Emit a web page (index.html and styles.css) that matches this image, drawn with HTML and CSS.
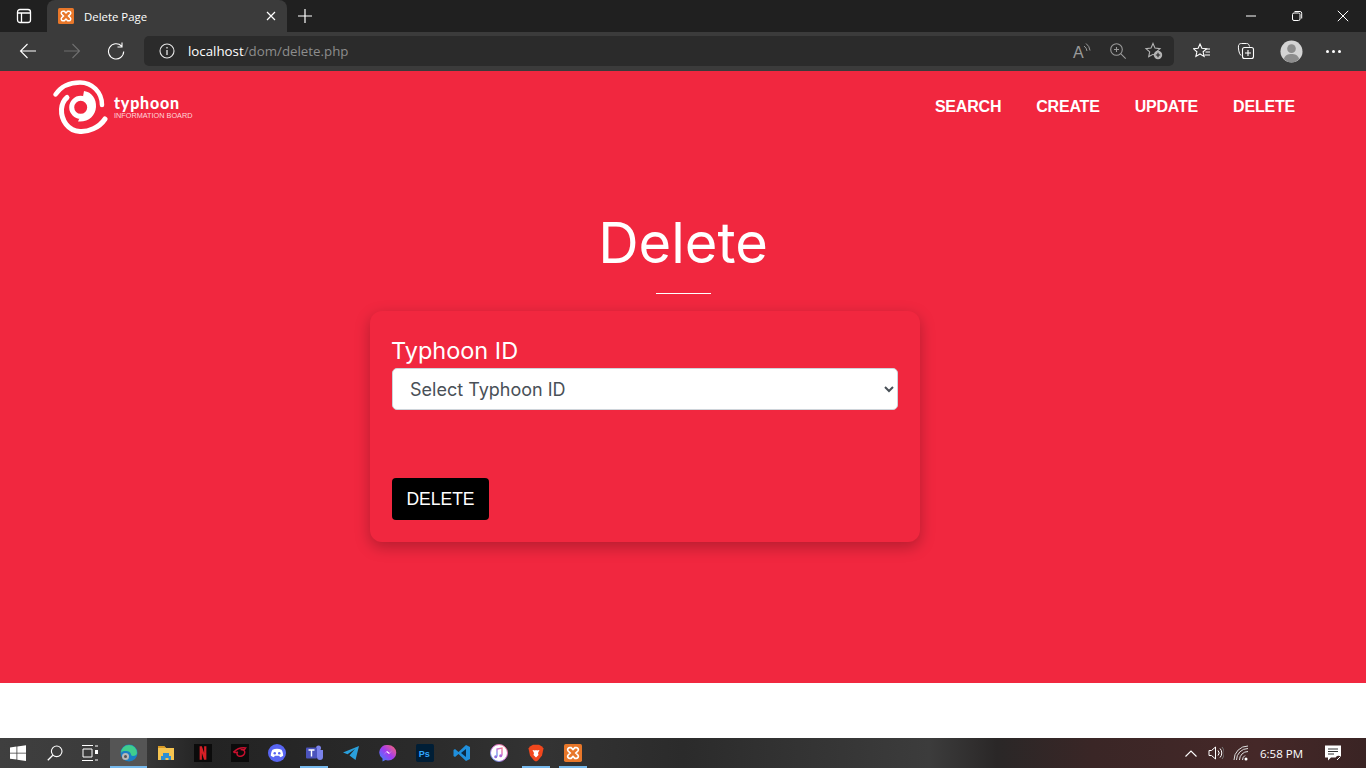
FILE: index.html
```html
<!DOCTYPE html>
<html lang="en">
<head>
<meta charset="utf-8">
<title>Delete Page</title>
<link rel="stylesheet" href="styles.css">
</head>
<body>
<header class="chrome">
  <div class="tabstrip">
    <div class="tabs-btn">
      <svg class="ic16" viewBox="0 0 16 16"><rect x="1.5" y="1.5" width="13" height="13" rx="2.5" fill="none" stroke="#fff" stroke-width="1.3"/><path d="M2 5h12M5.5 5v9" fill="none" stroke="#fff" stroke-width="1.3"/></svg>
    </div>
    <div class="tab">
      <svg class="fav" viewBox="0 0 16 16"><use href="#xampp"/></svg>
      <span class="tab-title">Delete Page</span>
      <svg class="tab-x" viewBox="0 0 10 10"><path d="M1 1l8 8M9 1l-8 8" stroke="#fff" stroke-width="1.2"/></svg>
    </div>
    <svg class="tab-plus" viewBox="0 0 14 14"><path d="M7 0v14M0 7h14" stroke="#fff" stroke-width="1.2"/></svg>
    <div class="winctl">
      <svg class="wc" viewBox="0 0 12 12"><path d="M1 6h10" stroke="#fff" stroke-width="1"/></svg>
      <svg class="wc" viewBox="0 0 12 12"><rect x="1.5" y="3" width="7.5" height="7.5" rx="1.5" fill="none" stroke="#fff"/><path d="M3.5 1.5h5.5a1.7 1.7 0 0 1 1.7 1.7v5.3" fill="none" stroke="#fff"/></svg>
      <svg class="wc" viewBox="0 0 12 12"><path d="M.8.8l10.4 10.4M11.2.8L.8 11.2" stroke="#fff" stroke-width="1"/></svg>
    </div>
  </div>
  <div class="toolbar">
    <div class="navbtns">
      <svg class="tb-ic" viewBox="0 0 18 18"><path d="M17 9H1.5M8.5 2L1.5 9l7 7" fill="none" stroke="#fff" stroke-width="1.1"/></svg>
      <svg class="tb-ic" viewBox="0 0 18 18"><path d="M1 9h15.5M9.5 2l7 7-7 7" fill="none" stroke="#6f6f6f" stroke-width="1.1"/></svg>
      <svg class="tb-ic" viewBox="0 0 18 18"><path d="M14.500 4A7.600 7.600 0 1 0 16.700 9.500M15 .5V5h-4.500" fill="none" stroke="#fff" stroke-width="1.100"/></svg>
    </div>
    <div class="omnibox">
      <svg class="info" viewBox="0 0 16 16"><circle cx="8" cy="8" r="7" fill="none" stroke="#e6e6e6" stroke-width="1.1"/><path d="M8 7v5M8 4v1.500" stroke="#e6e6e6" stroke-width="1.300"/></svg>
      <span class="url"><span class="host">localhost</span>/dom/delete.php</span>
      <div class="omni-right">
        <svg class="om-ic" viewBox="0 0 18 18"><text x="0" y="15.500" class="read-a">A</text><path d="M11 4a7 7 0 0 1 3 5M13 1.500a10 10 0 0 1 4 7" fill="none" stroke="#9a9a9a"/></svg>
        <svg class="om-ic" viewBox="0 0 18 18"><circle cx="7.500" cy="7.500" r="5.800" fill="none" stroke="#9a9a9a" stroke-width="1.100"/><path d="M11.700 11.700l5 5M5 7.500h5M7.500 5v5" stroke="#9a9a9a" stroke-width="1.100"/></svg>
        <svg class="om-ic" viewBox="0 0 18 18"><path d="M8 1.500l2 4.600 5 .5-3.700 3.300 1 4.800L8 12.300l-4.300 2.400 1-4.800L1 6.600l5-.5z" fill="none" stroke="#b5b5b5" stroke-width="1.100"/><circle cx="13" cy="13" r="4.200" fill="#b5b5b5"/><path d="M13 10.800v4.400M10.800 13h4.400" stroke="#222" stroke-width="1.100"/></svg>
      </div>
    </div>
    <div class="tools">
      <svg class="tl-ic" viewBox="0 0 18 18"><path d="M7 2l1.900 4.300 4.600.5-3.400 3 1 4.600L7 12l-4.100 2.400 1-4.600-3.400-3 4.600-.5z" fill="none" stroke="#fff" stroke-width="1.100"/><path d="M12 7h5M12.500 10h4.500M11.500 13H17" stroke="#fff" stroke-width="1"/></svg>
      <svg class="tl-ic" viewBox="0 0 18 18"><path d="M4 13.500C2 12 1 6 1.500 3.500 2 2 3 1.500 4.500 1.500h5c2 0 2.500 1 3 3" fill="none" stroke="#fff" stroke-width="1"/><rect x="5.500" y="5.500" width="11" height="11" rx="2" fill="#3b3b3b" stroke="#fff" stroke-width="1.100"/><path d="M11 8v6M8 11h6" stroke="#fff" stroke-width="1.100"/></svg>
      <svg class="avatar" viewBox="0 0 24 24"><circle cx="12" cy="12" r="11.500" fill="#d4d4d4"/><circle cx="12" cy="9" r="4.500" fill="#8d8d8d"/><path d="M4 20c1-4.500 4.500-5.500 8-5.500s7 1 8 5.500a11.500 11.500 0 0 1-16 0z" fill="#8d8d8d"/></svg>
      <span class="dots"><i></i><i></i><i></i></span>
    </div>
  </div>
</header>

<main class="page">
  <nav class="topnav">
    <a class="brand" href="#">
      <svg class="brand-mark" viewBox="0 0 64 60">
        <circle cx="30.700" cy="29.300" r="9" fill="none" stroke="#fff" stroke-width="5"/>
        <path d="M5.500 16.500C12 7 22 4.500 30 4.500 42 4.500 52 14 52 27" fill="none" stroke="#fff" stroke-width="4.500" stroke-linecap="round"/>
        <path d="M55 41C49 50 38 54 30 53.500 18 53 11 42 11.500 31 12 26 14 22 17 19.500" fill="none" stroke="#fff" stroke-width="5" stroke-linecap="round"/>
        <path d="M34 13C42 14 46.500 21 46 29 45.500 38 38 44.500 28 43.500L30.500 38C36 38 40 34 40 29 40 24 38 20.500 33 18.500Z" fill="#fff"/>
      </svg>
      <span class="brand-text">
        <span class="brand-name">typhoon</span>
        <span class="brand-sub">INFORMATION BOARD</span>
      </span>
    </a>
    <ul class="menu">
      <li><a href="#">SEARCH</a></li>
      <li><a href="#">CREATE</a></li>
      <li><a href="#">UPDATE</a></li>
      <li><a href="#">DELETE</a></li>
    </ul>
  </nav>
  <h1 class="title">Delete</h1>
  <div class="rule"></div>
  <form class="card">
    <label class="field-label" for="tid">Typhoon ID</label>
    <select class="field" id="tid">
      <option>Select Typhoon ID</option>
    </select>
    <button class="btn" type="button">DELETE</button>
  </form>
</main>

<div class="blank"></div>

<footer class="taskbar">
  <div class="tb-left">
    <span class="tb-cell">
      <svg class="ic16" viewBox="0 0 16 16"><path d="M0 2.400l6.500-.9v6.200H0zM7.300 1.400L16 .2v7.500H7.300zM0 8.500h6.500v6.100L0 13.700zM7.300 8.500H16v7.400l-8.700-1.200z" fill="#fff"/></svg>
    </span>
    <span class="tb-cell">
      <svg class="ic16" viewBox="0 0 16 16"><circle cx="9.700" cy="6.300" r="5.300" fill="none" stroke="#fff" stroke-width="1.100"/><path d="M5.800 10.200L.8 15.200" stroke="#fff" stroke-width="1.300"/></svg>
    </span>
    <span class="tb-cell tb-view">
      <svg class="ic16" viewBox="0 0 16 16"><path d="M0 .500h11M0 15.500h11M1 4h9v8H1zM13 1h3M13 15h3" fill="none" stroke="#fff" stroke-width="1"/><rect x="13" y="5" width="3" height="4" fill="#fff"/></svg>
    </span>
    <span class="tb-cell tb-active">
      <svg class="ic18" viewBox="0 0 18 18"><circle cx="9" cy="9" r="8.500" fill="#1a7fc4"/><path d="M1 9a8 8 0 0 1 16 0c0 2-2 3-4 3-3 0-1-3-4.500-4.500C5 6.500 2 7 1 9z" fill="#3fce8e"/><circle cx="5.500" cy="12.500" r="3.500" fill="#b8b8b8"/><circle cx="5.500" cy="12.500" r="1.500" fill="#555"/></svg>
    </span>
    <span class="tb-cell">
      <svg class="ic18" viewBox="0 0 18 18"><path d="M1 2h6l2 2h8v12H1z" fill="#f5c451"/><path d="M1 2h6l2 2H1z" fill="#d99a25"/><path d="M6 9h6v3h2v4h-2.500v-2h-3v2H4v-4h2z" fill="#2d8fd5"/></svg>
    </span>
    <span class="tb-cell">
      <svg class="ic18" viewBox="0 0 16 16"><rect width="16" height="16" fill="#0b0b0b"/><path d="M5 2h2l2 6V2h2v12H9L7 8v6H5z" fill="#d81f26"/></svg>
    </span>
    <span class="tb-cell">
      <svg class="ic18" viewBox="0 0 16 16"><rect width="16" height="16" fill="#0b0b0b"/><path d="M2.500 7c3-3 6.500-4 10.500-3.500L12 5H8.500c2.500 0 4.500 1 3.500 3.500-1 2-3.500 3-5.500 2C5 9.500 5 8 6 7 5 7.500 3.500 8 2.500 7z" fill="none" stroke="#c8102e" stroke-width="1.300"/></svg>
    </span>
    <span class="tb-cell">
      <svg class="ic18" viewBox="0 0 16 16"><circle cx="8" cy="8" r="8" fill="#5865f2"/><path d="M4 5c2.500-1 5.500-1 8 0 1 1.500 1.500 3.500 1.500 5.500-1 .7-2 1-2.800 1.200l-.7-1.200H6l-.7 1.200C4.500 11.500 3.500 11.200 2.500 10.500 2.500 8.500 3 6.500 4 5z" fill="#fff"/><circle cx="6" cy="8.300" r="1.100" fill="#5865f2"/><circle cx="10" cy="8.300" r="1.100" fill="#5865f2"/></svg>
    </span>
    <span class="tb-cell tb-running">
      <svg class="ic18" viewBox="0 0 18 18"><circle cx="13.500" cy="4" r="2.500" fill="#7b83eb"/><path d="M10 6h8v7a3 3 0 0 1-6 0z" fill="#7b83eb"/><rect x="1" y="3.500" width="11" height="11" rx="1" fill="#4b53bc"/><path d="M3.500 6h6M6.500 6v6.500" stroke="#fff" stroke-width="1.400"/></svg>
    </span>
    <span class="tb-cell">
      <svg class="ic18" viewBox="0 0 18 18"><path d="M17 2L1 8.500l4.500 1.800L13 5l-5.500 6.500 6 4.500z" fill="#2aa0dc"/></svg>
    </span>
    <span class="tb-cell">
      <svg class="ic18" viewBox="0 0 18 18"><defs><linearGradient id="msg" x1="0" y1="1" x2="1" y2="0"><stop offset="0" stop-color="#2f8cff"/><stop offset=".5" stop-color="#a33bf0"/><stop offset="1" stop-color="#ff6a6a"/></linearGradient></defs><path d="M9 1a8 7.500 0 0 1 0 15.500c-1 0-1.800-.1-2.500-.4L3.500 17.500v-3A7.500 7.500 0 0 1 9 1z" fill="url(#msg)"/><path d="M4.500 11L8 7l2.500 2L13.500 6 10 10 7.500 8z" fill="#fff"/></svg>
    </span>
    <span class="tb-cell">
      <svg class="ic18" viewBox="0 0 16 16"><rect width="16" height="16" rx="1.500" fill="#001e36"/><text x="2.500" y="11.500" class="ps">Ps</text></svg>
    </span>
    <span class="tb-cell">
      <svg class="ic18" viewBox="0 0 18 18"><path d="M13 1l4 2v12l-4 2L5.500 10 2 13 .5 12V6L2 5l3.500 3z" fill="#1f8fdc"/><path d="M13 5L8 9l5 4z" fill="#0b2a44"/></svg>
    </span>
    <span class="tb-cell">
      <svg class="ic18" viewBox="0 0 18 18"><defs><linearGradient id="itn" x1="0" y1="1" x2="1" y2="0"><stop offset="0" stop-color="#4aa8f0"/><stop offset=".5" stop-color="#c75fd0"/><stop offset="1" stop-color="#f7788b"/></linearGradient></defs><circle cx="9" cy="9" r="8.500" fill="#fff" stroke="url(#itn)" stroke-width="1"/><path d="M7 12.500V5l5-1v7.500" fill="none" stroke="url(#itn)" stroke-width="1.300"/><circle cx="5.700" cy="12.800" r="1.500" fill="#8f6fe0"/><circle cx="10.700" cy="11.800" r="1.500" fill="#b265d8"/></svg>
    </span>
    <span class="tb-cell tb-running">
      <svg class="ic18" viewBox="0 0 18 18"><path d="M3 2.500L6 .8h6l3 1.700 1.500 2-1.500 7L11 16.500 9 17.500l-2-1L3 11.500l-1.500-7z" fill="#f1471d"/><path d="M5.500 6L8 6.500 9 6l1 .5L12.500 6 11 9l.5 2L9 13.500 6.500 11 7 9z" fill="#fff"/></svg>
    </span>
    <span class="tb-cell tb-running">
      <svg class="ic18" viewBox="0 0 16 16"><use href="#xampp"/></svg>
    </span>
  </div>
  <div class="tray">
    <svg class="tray-caret" viewBox="0 0 12 7"><path d="M.5 6.500L6 1l5.500 5.500" fill="none" stroke="#fff" stroke-width="1.100"/></svg>
    <svg class="tray-ic" viewBox="0 0 16 16"><path d="M1 5.500h2.500L7.500 2v12l-4-3.500H1z" fill="none" stroke="#fff"/><path d="M10 5.500a3.500 3.500 0 0 1 0 5M12 3.500a6.500 6.500 0 0 1 0 9" fill="none" stroke="#fff"/><path d="M14 2a9 9 0 0 1 0 12" fill="none" stroke="#777"/></svg>
    <svg class="tray-ic" viewBox="0 0 16 16"><path d="M1 15a14 14 0 0 1 14-14M3.500 15A11.500 11.500 0 0 1 15 3.500M6.500 15A8.500 8.500 0 0 1 15 6.500M9.500 15A5.500 5.500 0 0 1 12 10.500" fill="none" stroke="#ddd" stroke-width="1"/><circle cx="13" cy="14" r="1.500" fill="#fff"/></svg>
    <span class="clock">6:58 PM</span>
    <svg class="tray-note" viewBox="0 0 18 18"><path d="M1 1.500h16v12H7l-3 3v-3H1z" fill="#fff"/><path d="M4 5h10M4 7.500h10M4 10h6" stroke="#333" stroke-width="1"/><circle cx="14.500" cy="14.500" r="2.800" fill="#3a2424"/><path d="M13 16l3-3" stroke="#fff"/></svg>
  </div>
</footer>

<svg class="defs" aria-hidden="true"><defs>
  <symbol id="xampp" viewBox="0 0 16 16">
    <rect width="16" height="16" rx="1.500" fill="#e8772a"/>
    <path d="M5 3.200h1.300L8 5l1.700-1.800H11a1.800 1.800 0 0 1 1.300 3L10.500 8l1.800 1.800a1.800 1.800 0 0 1-1.300 3H9.700L8 11l-1.700 1.800H5a1.800 1.800 0 0 1-1.300-3L5.500 8 3.700 6.200a1.800 1.800 0 0 1 1.300-3z" fill="none" stroke="#fff" stroke-width="1.500"/>
  </symbol>
</defs></svg>
</body>
</html>
```
FILE: styles.css
```css
* { box-sizing: border-box; }
html, body { margin: 0; height: 100%; }
body {
  display: flex;
  flex-direction: column;
  height: 768px;
  overflow: hidden;
  font-family: "Liberation Sans", Arial, sans-serif;
  background: #fff;
}
svg { display: block; flex: none; }
.defs { position: absolute; width: 0; height: 0; }
.ic16 { width: 16px; height: 16px; }
.ic18 { width: 18px; height: 18px; }

/* browser chrome */
.chrome { flex: none; height: 71px; background: #3b3b3b; }
.tabstrip {
  height: 32px;
  background: #202020;
  display: flex;
  align-items: center;
  padding-left: 16px;
}
.tabs-btn { width: 31px; }
.tab {
  width: 240px;
  height: 32px;
  background: #3b3b3b;
  border-radius: 8px 8px 0 0;
  display: flex;
  align-items: center;
  padding: 0 11px;
  color: #fff;
  font: 11.400px "Open Sans", sans-serif;
}
.fav { width: 16px; height: 16px; }
.tab-title { margin-left: 10px; flex: 1; }
.tab-x { width: 10px; height: 10px; }
.tab-plus { width: 14px; height: 14px; margin-left: 11px; }
.winctl { margin-left: auto; display: flex; gap: 34px; padding-right: 17px; }
.wc { width: 12px; height: 12px; }
.toolbar { height: 39px; display: flex; align-items: center; padding-bottom: 1px; }
.navbtns { display: flex; gap: 26px; padding-left: 19px; width: 144px; }
.tb-ic { width: 18px; height: 18px; }
.omnibox {
  width: 1030px;
  height: 30px;
  background: #2b2b2b;
  border-radius: 5px;
  display: flex;
  align-items: center;
  padding: 0 11px 0 15px;
}
.info { width: 16px; height: 16px; }
.url { margin-left: 13px; font: 13.300px "Open Sans", sans-serif; color: #8d8d8d; }
.host { color: #fff; }
.omni-right { margin-left: auto; display: flex; gap: 18px; }
.om-ic { width: 18px; height: 18px; overflow: visible; }
.read-a { font: 16px "Liberation Sans", sans-serif; fill: #9a9a9a; }
.tools { display: flex; align-items: center; padding-left: 19px; }
.tl-ic { width: 18px; height: 18px; margin-right: 26px; }
.avatar { width: 23px; height: 23px; margin-left: -1px; }
.dots { display: flex; gap: 3px; margin-left: 23px; }
.dots i { width: 3px; height: 3px; border-radius: 50%; background: #fff; }

/* page */
.page {
  flex: none;
  height: 612px;
  background: #f1273f;
  display: flex;
  flex-direction: column;
  align-items: center;
  color: #fff;
}
.topnav {
  align-self: stretch;
  height: 72px;
  padding: 7px 71px 0 50px;
  display: flex;
  align-items: flex-start;
  justify-content: space-between;
}
.brand { display: flex; align-items: center; color: #fff; text-decoration: none; }
.brand-mark { width: 64px; height: 60px; }
.brand-text { display: flex; flex-direction: column; margin-top: -1px; }
.brand-name { font: 900 16px/16px Lato, sans-serif; letter-spacing: .8px; }
.brand-sub { font: 7.300px/10px "Liberation Sans", sans-serif; color: #ffd6db; }
.menu {
  list-style: none;
  margin: 20px 0 0;
  padding: 0;
  display: flex;
  gap: 35px;
}
.menu a {
  color: #fff;
  text-decoration: none;
  font-weight: 700;
  font-size: 16px;
  letter-spacing: -.2px;
}
.title {
  margin: 66px 0 0;
  font: 400 56px/68px Inter, sans-serif;
  letter-spacing: 0;
}
.rule { width: 55px; height: 1px; background: #fff; margin-top: 16px; }
.card {
  width: 550px;
  height: 231px;
  margin: 17px 0 0 -76px;
  padding: 22px;
  background: #f1273f;
  border-radius: 12px;
  box-shadow: 0 5px 15px rgba(0, 0, 0, .25);
  display: flex;
  flex-direction: column;
  align-items: flex-start;
}
.field-label { font: 400 23.500px/35px Inter, sans-serif; height: 35px; margin-left: -1px; }
.field {
  width: 506px;
  height: 42px;
  border: 1px solid #ced4da;
  border-radius: 5px;
  background: #fff;
  color: #495057;
  padding: 0 15px 0 13px;
  font: 400 18px Inter, sans-serif;
}
.btn {
  margin-top: 68px;
  width: 97px;
  height: 42px;
  background: #000;
  color: #fff;
  border: 0;
  border-radius: 4px;
  font: 400 17.500px "Liberation Sans", sans-serif;
}
.blank { flex: none; height: 55px; background: #fff; }

/* taskbar */
.taskbar {
  flex: none;
  height: 30px;
  display: flex;
  align-items: center;
  justify-content: space-between;
  background: linear-gradient(90deg, #3f3f3f 0, #3a3a3a 10%, #232323 15%, #2a2a2a 30%, #333 40%, #2b2b2b 50%, #3c3c3c 68%, #2a2727 73%, #3a2626 80%, #452828 92%, #3a2424 100%);
}
.tb-left { display: flex; align-items: stretch; height: 30px; margin-left: -1px; }
.tb-cell {
  width: 37px;
  height: 30px;
  display: flex;
  align-items: center;
  justify-content: center;
}
.tb-view { padding-right: 4px; }
.tb-active { background: #555; box-shadow: inset 0 -2px 0 #76b9ed; }
.tb-running {
  background: linear-gradient(#76b9ed, #76b9ed) center bottom / 28px 2px no-repeat;
}
.ps { font: 700 8px "Liberation Sans", sans-serif; fill: #31a8ff; }
.tray { display: flex; align-items: center; height: 30px; padding-right: 24px; }
.tray-caret { width: 12px; height: 7px; margin-right: 1px; }
.tray-ic { width: 16px; height: 16px; margin-left: 10px; }
.tray-ic + .tray-ic { margin-left: 9px; }
.clock { color: #fff; font: 11.500px "Open Sans", sans-serif; margin-left: 11px; }
.tray-note { width: 18px; height: 18px; margin-left: 21px; }
```
